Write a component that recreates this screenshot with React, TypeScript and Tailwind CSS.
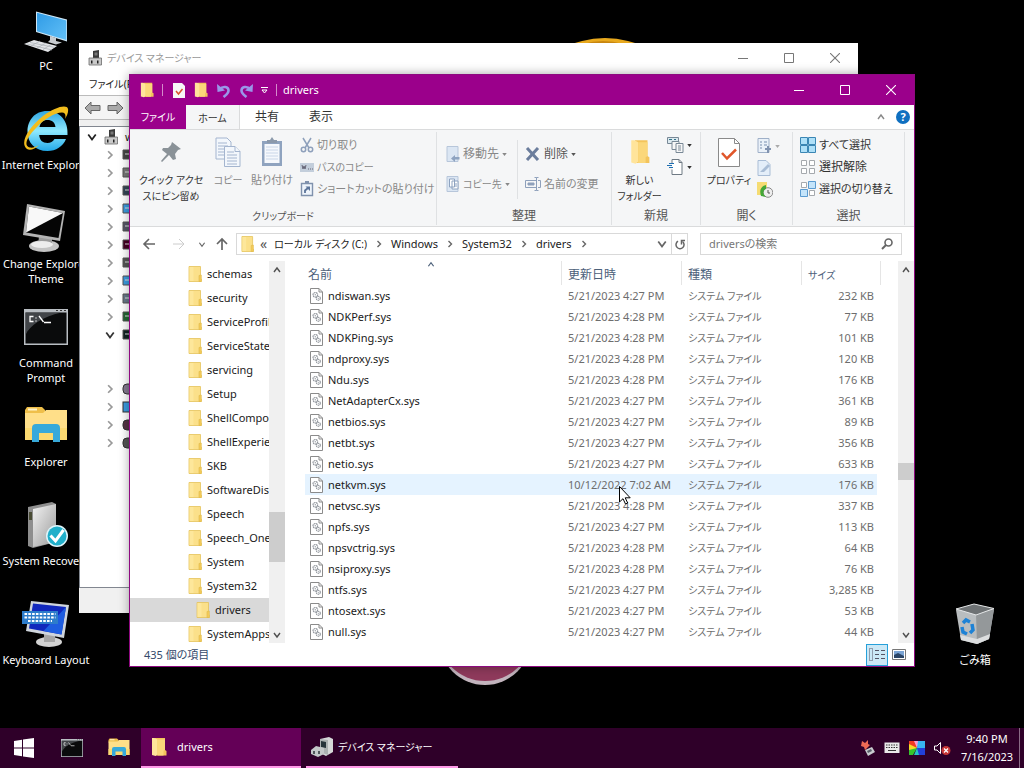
import { useState } from "react";
import type { ReactNode } from "react";

type SysFile = { name: string; date: string; size: string };

const files: SysFile[] = [
  { name: "ndiswan.sys", date: "5/21/2023 4:27 PM", size: "232 KB" },
  { name: "NDKPerf.sys", date: "5/21/2023 4:28 PM", size: "77 KB" },
  { name: "NDKPing.sys", date: "5/21/2023 4:28 PM", size: "101 KB" },
  { name: "ndproxy.sys", date: "5/21/2023 4:28 PM", size: "120 KB" },
  { name: "Ndu.sys", date: "5/21/2023 4:28 PM", size: "176 KB" },
  { name: "NetAdapterCx.sys", date: "5/21/2023 4:27 PM", size: "361 KB" },
  { name: "netbios.sys", date: "5/21/2023 4:27 PM", size: "89 KB" },
  { name: "netbt.sys", date: "5/21/2023 4:27 PM", size: "356 KB" },
  { name: "netio.sys", date: "5/21/2023 4:27 PM", size: "633 KB" },
  { name: "netkvm.sys", date: "10/12/2022 7:02 AM", size: "176 KB" },
  { name: "netvsc.sys", date: "5/21/2023 4:28 PM", size: "337 KB" },
  { name: "npfs.sys", date: "5/21/2023 4:27 PM", size: "113 KB" },
  { name: "npsvctrig.sys", date: "5/21/2023 4:28 PM", size: "64 KB" },
  { name: "nsiproxy.sys", date: "5/21/2023 4:28 PM", size: "76 KB" },
  { name: "ntfs.sys", date: "5/21/2023 4:27 PM", size: "3,285 KB" },
  { name: "ntosext.sys", date: "5/21/2023 4:27 PM", size: "53 KB" },
  { name: "null.sys", date: "5/21/2023 4:27 PM", size: "44 KB" },
];

const folders = [
  "schemas",
  "security",
  "ServiceProfiles",
  "ServiceState",
  "servicing",
  "Setup",
  "ShellComponents",
  "ShellExperiences",
  "SKB",
  "SoftwareDistribution",
  "Speech",
  "Speech_OneCore",
  "System",
  "System32",
  "drivers",
  "SystemApps",
];

/* ---------- shared glyphs ---------- */

function FolderIcon({ className = "h-4 w-[14px]" }: { className?: string }) {
  return (
    <svg viewBox="0 0 14 16" preserveAspectRatio="none" className={`shrink-0 ${className}`} aria-hidden="true">
      <path d="M1 .5h11.500v12l.8.500v2.500H1z" fill="#fbe08a" stroke="#e5c35a" strokeWidth=".8" />
      <path d="M1.500 1h4v14h-4z" fill="#fde79b" />
      <path d="M11 9.500l2.300-.5v6.500H11z" fill="#f4cb5b" stroke="#dfb948" strokeWidth=".6" />
    </svg>
  );
}

function OpenFolderIcon({ className = "h-5 w-4" }: { className?: string }) {
  return (
    <svg viewBox="0 0 16 20" preserveAspectRatio="none" className={`shrink-0 ${className}`} aria-hidden="true">
      <path d="M4 1h10v12l1.500 1v4.500H4z" fill="#f3c45c" />
      <path d="M1 1h2.500l3 1.500v15L4.500 19 1 18z" fill="#ffe49b" />
      <path d="M6.500 2.500H14V13l-1.500 1v4.500H6.500z" fill="#fbd77a" />
    </svg>
  );
}

function Chevron({ dir, className = "h-2 w-2" }: { dir: "up" | "down" | "right"; className?: string }) {
  const d = { up: "M1 6l3-4 3 4", down: "M1 2l3 4 3-4", right: "M2.500 1l3 3-3 3" }[dir];
  return (
    <svg viewBox="0 0 8 8" className={`shrink-0 ${className}`} fill="none" stroke="currentColor" strokeWidth="1.400" aria-hidden="true">
      <path d={d} />
    </svg>
  );
}

function Caret() {
  return (
    <svg viewBox="0 0 6 4" className="h-[3px] w-[5px] shrink-0" fill="currentColor" aria-hidden="true">
      <path d="M0 0h6L3 4z" />
    </svg>
  );
}

function SysFileIcon() {
  return (
    <svg viewBox="0 0 13 16" className="h-4 w-[13px] shrink-0" fill="none" aria-hidden="true">
      <path d="M.5.5h8.500l3.500 3.500v11.500H.5z" fill="#fff" stroke="#8b8b8b" />
      <path d="M9 .5v3.500h3.500" stroke="#8b8b8b" />
      <circle cx="5.300" cy="6.800" r="2.300" stroke="#8d9299" strokeWidth="1.100" strokeDasharray="1.600 .5" />
      <circle cx="5.300" cy="6.800" r=".7" fill="#9aa0a8" />
      <circle cx="8.300" cy="10.300" r="2" stroke="#8d9299" strokeWidth="1.100" strokeDasharray="1.500 .5" />
      <circle cx="8.300" cy="10.300" r=".6" fill="#9aa0a8" />
    </svg>
  );
}

function DeviceIcon({ className = "h-4 w-[14px]" }: { className?: string }) {
  return (
    <svg viewBox="0 0 14 16" className={`shrink-0 ${className}`} aria-hidden="true">
      <path d="M5 1l6-1v8H5z" fill="#3a3a3a" />
      <path d="M6.500 2.500h3v3h-3z" fill="#777" />
      <path d="M1 8h12.500v7H1z" fill="#c9c9c9" stroke="#6c6c6c" strokeWidth=".8" />
      <path d="M3 10.500h1.500v3H3zM9 10.500h1.500v3H9z" fill="#222" />
    </svg>
  );
}

function CaptionButtons({ className }: { className: string }) {
  return (
    <div className={`flex ${className}`}>
      <button type="button" aria-label="最小化" className="flex h-7 w-[46px] items-center justify-center">
        <svg viewBox="0 0 10 10" className="h-[10px] w-[10px]" stroke="currentColor"><path d="M0 5.500h10" /></svg>
      </button>
      <button type="button" aria-label="最大化" className="flex h-7 w-[46px] items-center justify-center">
        <svg viewBox="0 0 10 10" className="h-[10px] w-[10px]" fill="none" stroke="currentColor"><path d="M.5.5h9v9h-9z" /></svg>
      </button>
      <button type="button" aria-label="閉じる" className="flex h-7 w-[46px] items-center justify-center">
        <svg viewBox="0 0 10 10" className="h-[10px] w-[10px]" stroke="currentColor" strokeWidth="1.100"><path d="M0 0l10 10M10 0L0 10" /></svg>
      </button>
    </div>
  );
}

/* ---------- desktop ---------- */

function PcIcon() {
  return (
    <svg viewBox="0 0 48 48" className="h-12 w-12" aria-hidden="true">
      <defs>
        <linearGradient id="pc" x1="0" y1="0" x2="1" y2="1">
          <stop offset="0" stopColor="#2f9be6" />
          <stop offset="1" stopColor="#62c0f7" />
        </linearGradient>
      </defs>
      <path d="M14 5.500l31 8v22L14 26z" fill="#cfe6f5" />
      <path d="M15 6.700l29.300 7.700v19.700L15 25.300z" fill="url(#pc)" />
      <path d="M28 30l6 2v3l6 1.500-6 2-8-2.500 2-2z" fill="#c8ccd0" />
      <path d="M2 38l10-4 23 6-9 6z" fill="#e3e5e8" />
      <path d="M5 38l25 6M8 36.500l25 5M9 40l9-5M15 42l9-5M21 43.500l8-5" stroke="#a8adb3" strokeWidth=".7" />
    </svg>
  );
}

function IeIcon() {
  return (
    <svg viewBox="0 0 48 48" className="h-12 w-12" aria-hidden="true">
      <defs>
        <linearGradient id="ie" x1="0" y1="0" x2="0" y2="1">
          <stop offset="0" stopColor="#2fa5e0" />
          <stop offset=".5" stopColor="#8fe9ff" />
          <stop offset="1" stopColor="#23a9e8" />
        </linearGradient>
      </defs>
      <path
        fillRule="evenodd"
        fill="url(#ie)"
        d="M25 6C13 6 5.500 15 5.500 26.500S13 46 25.500 46C34 46 41 41.500 44 34H32.500c-1.500 2.500-4 4-7 4-5 0-8-3-8.300-8H45.500C46.500 16 38 6 25 6zM17.500 22c.8-4.500 3.500-7 8-7s7.500 2.500 8 7z"
      />
      <path d="M5 44C-3 38 7 22 21 11 33 2 45-1 46 4c.6 3-1 7-3 10 1-4 .5-6.500-3-6.500C33 7.500 22 14 14 23 5 32 1 41 8 42.500c3 .6 6-.8 9-2.500-4 4-9 6-12 4z" fill="#f2bd1d" />
    </svg>
  );
}

function ThemeIcon() {
  return (
    <svg viewBox="0 0 48 48" className="h-12 w-12" aria-hidden="true">
      <ellipse cx="22" cy="42" rx="15" ry="6" fill="#c4c4c4" />
      <path d="M17 32l13 2v8H16z" fill="#9a9a9a" />
      <path d="M5 0l38 7-5 30L1 31z" fill="#b4b4b4" />
      <path d="M7 2.500l34 6.500-4.500 25L4 28.500z" fill="#050505" />
      <path d="M7 2.500l34 6.500L4 28.500z" fill="#f8f8f8" />
      <ellipse cx="20" cy="40.500" rx="11" ry="3.500" fill="#ededed" />
    </svg>
  );
}

function CmdIcon({ className = "h-12 w-12" }: { className?: string }) {
  return (
    <svg viewBox="0 0 48 48" className={className} aria-hidden="true">
      <path d="M2 6h44v36H2z" fill="#b9bec3" />
      <path d="M3.500 9.500h41v31h-41z" fill="#0a0b0c" />
      <path d="M3.500 9.500h36C20 14 8 22 3.500 32z" fill="#55595d" opacity=".75" />
      <path d="M34 7.500h2M38 7.500h2M42 7.500h2" stroke="#333" />
      <path d="M11.500 13.500H8v5h3.500M14 14.500v1M14 17.500v1M17 13l4.500 6M22 19.500h7" stroke="#fff" strokeWidth="1.300" fill="none" />
    </svg>
  );
}

function ExplorerIcon({ className = "h-12 w-12" }: { className?: string }) {
  return (
    <svg viewBox="0 0 48 48" className={className} aria-hidden="true">
      <path d="M3 8l2-3h15l3 3v5H3z" fill="#efbf4a" />
      <path d="M6 6.500h9v2H6z" fill="#fff3c9" />
      <path d="M3 11h18l3-3h21v30H3z" fill="#ffdf89" />
      <path d="M3 26h42v12H3z" fill="#fbd970" />
      <path d="M10 40V26q0-4 4-4h20q4 0 4 4v14h-7v-9H17v9z" fill="#37a9da" />
    </svg>
  );
}

function RecoveryIcon() {
  return (
    <svg viewBox="0 0 48 48" className="h-12 w-12" aria-hidden="true">
      <defs>
        <linearGradient id="rec" x1="0" y1="0" x2="1" y2="1">
          <stop offset="0" stopColor="#f2f2f2" />
          <stop offset="1" stopColor="#9b9b9b" />
        </linearGradient>
      </defs>
      <path d="M6 6l24-5 4 2v38L11 47l-5-2z" fill="#8e8e8e" />
      <path d="M11 8l23-5v38l-23 5z" fill="url(#rec)" />
      <path d="M7 11h3v8H7z" fill="#4a4c35" />
      <circle cx="35" cy="35" r="11" fill="#dff5fb" />
      <circle cx="35" cy="35" r="9.500" fill="#21afca" />
      <path d="M28.500 34.500l5 5.500 8-11" stroke="#fff" strokeWidth="3" fill="none" />
    </svg>
  );
}

function KeyboardLayoutIcon() {
  return (
    <svg viewBox="0 0 48 48" className="h-12 w-12" aria-hidden="true">
      <ellipse cx="27" cy="42" rx="13" ry="5" fill="#d3d3d3" />
      <path d="M22 33h11v9H22z" fill="#a7a7a7" />
      <path d="M9 1l38 4-5 33-38-7z" fill="#cfd5dc" />
      <path d="M11 3.500l33 3.500-4.500 27.500L7 28.500z" fill="#1128bd" />
      <path d="M44 7l-4.500 27.500-18-3.500z" fill="#1e5de0" />
      <path d="M0 11h36v13H0z" fill="#2d7ccb" />
      <path d="M2.500 14h31M2.500 17.500h31M6 21h24" stroke="#fff" strokeWidth="2.200" strokeDasharray="2.600 1.200" />
    </svg>
  );
}

function RecycleBinIcon() {
  return (
    <svg viewBox="0 0 48 48" className="h-12 w-12" aria-hidden="true">
      <path d="M5 10l5 30 16 4 12-5 5-30-18-4z" fill="#b9bdbf" />
      <path d="M25 14l1 30 12-5 5-30z" fill="#94989a" />
      <path d="M5 9l18-5 20 4.500L25 15z" fill="#6e7274" stroke="#e5e7e8" />
      <path d="M9 35l17 4 13-5-1 5-12 5-16-4z" fill="#dcdedf" />
      <g stroke="#1d82d6" strokeWidth="3.500" fill="none">
        <path d="M12 23l3-3 4 2" />
        <path d="M21 24l1 6-3 3" />
        <path d="M16 34l-4-2-1-5" />
      </g>
    </svg>
  );
}

function DesktopIcon({ label, children }: { label: string; children: ReactNode }) {
  return (
    <button type="button" className="flex h-[99px] w-[92px] flex-col items-center gap-1 pt-[6px] text-center leading-[15px] text-white">
      {children}
      <span>{label}</span>
    </button>
  );
}

function Wallpaper() {
  return (
    <svg viewBox="0 0 1024 728" preserveAspectRatio="none" className="absolute inset-0 h-full w-full" aria-hidden="true">
      <ellipse cx="605" cy="76" rx="60" ry="38" fill="#e8a91e" />
      <ellipse cx="603" cy="80" rx="52" ry="39" fill="#c98710" />
      <circle cx="485" cy="639" r="46" fill="#c2b4bd" />
      <circle cx="485" cy="634" r="47" fill="#8f3a5c" />
    </svg>
  );
}

/* ---------- device manager ---------- */

const treeColors = ["#444", "#777", "#345", "#3b9be0", "#556", "#402", "#555", "#3b9be0", "#678", "#263", "#122"];

function DeviceManager() {
  return (
    <section aria-label="デバイス マネージャー" className="absolute left-[79px] top-[43px] flex h-[570px] w-[779px] flex-col bg-[#f0f0f0] shadow-lg">
      <header className="flex h-[30px] items-center bg-white pl-[9px] text-[#999]">
        <DeviceIcon />
        <h2 className="ml-[5px] flex-1 text-[10px]">デバイス マネージャー</h2>
        <CaptionButtons className="text-[#777]" />
      </header>
      <div className="flex h-[22px] items-center bg-white pl-[10px] text-[10px] text-[#222]">
        <button type="button">ファイル(F)</button>
      </div>
      <div className="flex h-[25px] items-center gap-[6px] border-y border-[#bbb] bg-[#f5f5f5] pl-[5px]">
        {["戻る", "進む"].map((label) => (
          <button type="button" key={label} aria-label={label}>
            <svg viewBox="0 0 17 14" className={label === "進む" ? "h-[14px] w-[17px] -scale-x-100" : "h-[14px] w-[17px]"}>
              <path d="M1 7l6-6v3.500h9v5H7V13z" fill="#aaa" stroke="#666" />
            </svg>
          </button>
        ))}
      </div>
      <ul className="mt-[6px] flex-1 border border-[#828790] bg-white pt-px text-[#222]">
        <li className="flex h-[18px] items-center gap-[7px] pl-[7px]">
          <Chevron dir="down" className="h-[10px] w-[10px]" />
          <DeviceIcon />
          <span>w</span>
        </li>
        {treeColors.map((color, i) => (
          <li key={i} className="flex h-[18px] items-center gap-[7px] pl-[25px] text-[#999]">
            {i === 10 ? (
              <Chevron dir="down" className="h-[10px] w-[10px] text-[#333]" />
            ) : (
              <Chevron dir="right" className="h-[10px] w-[10px]" />
            )}
            <svg viewBox="0 0 16 14" className="h-[14px] w-4">
              <path d="M1 2h14v9H1z" fill={color} stroke="#555" />
              <path d="M3 5h4v2H3z" fill="#ddd" opacity=".5" />
            </svg>
          </li>
        ))}
        <li className="h-9" />
        {["#857a90", "#3b9be0", "#534", "#555"].map((color, i) => (
          <li key={i} className="flex h-[18px] items-center gap-[7px] pl-[25px] text-[#999]">
            <Chevron dir="right" className="h-[10px] w-[10px]" />
            <svg viewBox="0 0 16 14" className="h-[14px] w-4">
              <rect x="1" y="2" width="14" height="10" rx={i === 1 ? 0 : 4} fill={color} stroke="#333" />
            </svg>
          </li>
        ))}
      </ul>
      <footer className="h-[25px]" />
    </section>
  );
}

/* ---------- explorer window ---------- */

function QuickAccessBar() {
  return (
    <header className="flex h-[30px] items-center pl-[10px] text-white">
      <OpenFolderIcon className="h-4 w-[14px]" />
      <span className="ml-[8px] h-3 border-l border-[#d48bcb]" />
      <button type="button" aria-label="プロパティ" className="ml-[10px]">
        <svg viewBox="0 0 12 15" className="h-[15px] w-3">
          <path d="M0 0h9l3 3v12H0z" fill="#f7f7f7" />
          <path d="M3 8l2.500 3 4-5" stroke="#d9542b" strokeWidth="1.500" fill="none" />
        </svg>
      </button>
      <button type="button" aria-label="新しいフォルダー" className="ml-[9px]">
        <OpenFolderIcon className="h-4 w-[14px]" />
      </button>
      {["元に戻す", "やり直し"].map((label) => (
        <button type="button" key={label} aria-label={label} className="ml-2">
          <svg viewBox="0 0 15 15" className={label === "やり直し" ? "h-[15px] w-[15px] -scale-x-100" : "h-[15px] w-[15px]"} fill="none">
            <path d="M3.500 6.500C7 2.500 12.500 3.500 12.500 7.500c0 3-2.500 4.500-5 6.500" stroke="#9a97e8" strokeWidth="2.600" />
            <path d="M1 1l.5 8 7.500-1.500z" fill="#9a97e8" />
          </svg>
        </button>
      ))}
      <button type="button" aria-label="クイック アクセス ツール バーのカスタマイズ" className="ml-[7px]">
        <svg viewBox="0 0 7 7" className="h-[7px] w-[7px]" stroke="currentColor" fill="none"><path d="M0 .5h7M1 3h5L3.500 6z" /></svg>
      </button>
      <span className="ml-2 h-3 border-l border-[#d48bcb]" />
      <h1 className="ml-[6px] flex-1">drivers</h1>
      <CaptionButtons className="text-white" />
    </header>
  );
}

function RibbonGroup({ title, titleClass = "text-[12px]", className, children }: { title: string; titleClass?: string; className: string; children: ReactNode }) {
  return (
    <section className={`flex h-[93px] flex-col border-r border-[#dfe1e3] ${className}`}>
      <div className="flex h-[75px]">{children}</div>
      <h3 className={`text-center leading-[18px] text-[#555] ${titleClass}`}>{title}</h3>
    </section>
  );
}

function BigButton({ lines, className, children }: { lines: string[]; className: string; children: ReactNode }) {
  return (
    <button type="button" className={`flex shrink-0 flex-col items-center whitespace-nowrap leading-4 ${className}`}>
      <span className="flex h-10 items-center justify-center">{children}</span>
      {lines.map((line) => (
        <span key={line}>{line}</span>
      ))}
    </button>
  );
}

function SmallButton({ label, caret, className = "text-[#888]", children }: { label?: string; caret?: boolean; className?: string; children: ReactNode }) {
  return (
    <button type="button" className={`flex h-[22px] items-center gap-[3px] whitespace-nowrap ${className}`}>
      {children}
      {label ? <span>{label}</span> : null}
      {caret ? <Caret /> : null}
    </button>
  );
}

function Ribbon() {
  return (
    <div className="flex h-[98px] border-y border-[#dadbdc] bg-[#f5f6f7] pt-[2px]">
      <RibbonGroup title="クリップボード" titleClass="text-[10px]" className="w-[307px]">
        <BigButton lines={["クイック アクセ", "スにピン留め"]} className="ml-1 w-[74px] text-[10px] text-[#333]">
          <svg viewBox="0 0 22 22" className="h-[22px] w-[22px]"><path d="M12 1l9 7-3 1-3 4 1 5-3 1-4-5-7 7-1-1 6-7-5-4 1-2 5 0 3-3z" fill="#8a9298" /></svg>
        </BigButton>
        <BigButton lines={["コピー"]} className="w-10 text-[10px] text-[#888]">
          <svg viewBox="0 0 26 30" className="h-[30px] w-[26px]" fill="#f3f7fc" stroke="#a4b5cf">
            <path d="M1 1h11l4 4v17H1z" />
            <path d="M3 6h9M3 9h10M3 12h8M3 15h6M3 18h6" />
            <path d="M9.500 9.500H20l5 5v15H9.500z" />
            <path d="M20 9.500v5h5M12 15h7M12 18h10M12 21h10M12 24h10M12 27h10" />
          </svg>
        </BigButton>
        <BigButton lines={["貼り付け"]} className="w-12 text-[#888]">
          <svg viewBox="0 0 22 30" className="h-[30px] w-[22px]">
            <path d="M1 4h20v25H1z" fill="#8fa3bf" />
            <path d="M3.500 7h15v19h-15z" fill="#f5f8fc" />
            <path d="M5 10h12M5 13h12M5 16h12M5 19h12M5 22h12" stroke="#c9d6e8" />
            <path d="M6 6V3h3l2-3 2 3h3v3z" fill="#8b99ab" />
          </svg>
        </BigButton>
        <div className="ml-1 flex flex-col pt-[2px]">
          <SmallButton label="切り取り">
            <svg viewBox="0 0 14 16" className="h-4 w-[14px]" fill="none" stroke="#8ea0bb" strokeWidth="1.500"><path d="M3 1l6 10M11 1L5 11" /><circle cx="3.500" cy="12.500" r="2.200" /><circle cx="10.500" cy="12.500" r="2.200" /></svg>
          </SmallButton>
          <SmallButton label="パスのコピー" className="text-[10px] text-[#888]">
            <svg viewBox="0 0 14 9" className="h-[9px] w-[14px]"><path d="M0 0h14v9H0z" fill="#c3cedb" /><path d="M2 2l1 4 1-3 1 3 1-4M8 6h1M10 6h1M12 6h1" stroke="#667" fill="none" /></svg>
          </SmallButton>
          <SmallButton label="ショートカットの貼り付け">
            <svg viewBox="0 0 14 16" className="h-4 w-[14px]"><path d="M1.500 2.500h11v12h-11z" fill="#eef4fb" stroke="#8092ad" strokeWidth="1.400" /><path d="M5 0h4v3H5z" fill="#8092ad" /><path d="M5 12V9.500L8 7" fill="none" stroke="#5b7499" strokeWidth="1.800" /><path d="M5.500 5.500H10V10z" fill="#5b7499" /></svg>
          </SmallButton>
        </div>
      </RibbonGroup>

      <RibbonGroup title="整理" className="w-[175px]">
        <div className="my-2 flex w-[81px] flex-col gap-2 border-r border-[#dfe1e3] pl-[9px] pt-[3px]">
          <SmallButton label="移動先" caret className="text-[12px] text-[#888]">
            <svg viewBox="0 0 14 16" className="h-4 w-[14px]"><path d="M1 .5h11v15H1z" fill="#dbe6f3" stroke="#b7c6da" /><path d="M13.500 11H9V9l-4 3.500L9 16v-2.500h4.500z" fill="#8ea3c0" /></svg>
          </SmallButton>
          <SmallButton label="コピー先" caret className="text-[10px] text-[#888]">
            <svg viewBox="0 0 14 16" className="h-4 w-[14px]"><path d="M1 .5h11v15H1z" fill="#dbe6f3" stroke="#b7c6da" /><path d="M3.500 3h5v8h-5zM6 5h6v8H6z" fill="#fff" stroke="#8ea3c0" /><path d="M8 8h3M8 10h3" stroke="#8ea3c0" /></svg>
          </SmallButton>
        </div>
        <div className="my-2 flex flex-col gap-2 pl-[7px] pt-[3px]">
          <SmallButton label="削除" caret className="text-[12px] text-[#555]">
            <svg viewBox="0 0 16 14" className="h-[14px] w-4" stroke="#6b7d9c" strokeWidth="3"><path d="M2 1l11 12M13 1L2 13" /></svg>
          </SmallButton>
          <SmallButton label="名前の変更">
            <svg viewBox="0 0 16 14" className="h-[14px] w-4" fill="none" stroke="#8ea0bb"><path d="M11 3.500H.5v7H11M13 3.500h2.500v7H13M9.500.5h2v13h-2M11.500.5h2M11.500 13.500h2" /><path d="M3 6h6v2H3z" fill="#8ea0bb" /></svg>
          </SmallButton>
        </div>
      </RibbonGroup>

      <RibbonGroup title="新規" className="w-[89px]">
        <BigButton lines={["新しい", "フォルダー"]} className="w-[55px] text-[10px] text-[#333]">
          <OpenFolderIcon className="h-[26px] w-5" />
        </BigButton>
        <div className="flex flex-col pt-[2px]">
          <SmallButton caret className="text-[#333]">
            <svg viewBox="0 0 17 16" className="h-4 w-[17px]" fill="#f7f7f7" stroke="#788896"><path d="M.5.5h11v6H.5z" fill="#dbe9ef" /><path d="M2 2.500h3M7 2.500h2" stroke="#35748a" /><path d="M5 4.500h7v8H5z" /><path d="M9 6.500h7v9H9z" /><path d="M11 9h3M11 11h3M11 13h3" /></svg>
          </SmallButton>
          <SmallButton caret className="text-[#333]">
            <svg viewBox="0 0 17 16" className="h-4 w-[17px]" fill="none" stroke="#6f7a84"><path d="M5 4V.5h7l3 3v12H5v-5" fill="#fff" /><path d="M12 .5v3h3" /><path d="M2 4.500h5M0 6.500h5M2 8.500h4" stroke="#1f6fb2" /></svg>
          </SmallButton>
        </div>
      </RibbonGroup>

      <RibbonGroup title="開く" className="w-[92px]">
        <BigButton lines={["プロパティ"]} className="w-14 text-[10px] text-[#333]">
          <svg viewBox="0 0 22 29" className="h-[29px] w-[22px]" fill="none"><path d="M.5.5h16l5 5v23H.5z" fill="#fff" stroke="#8a8a8a" /><path d="M16.500.5v5h5" stroke="#8a8a8a" /><path d="M4 15l5 5.500 9-9" stroke="#e0562a" strokeWidth="2.500" /></svg>
        </BigButton>
        <div className="flex flex-col pt-[3px]">
          <SmallButton caret className="text-[#aaa]">
            <svg viewBox="0 0 15 16" className="h-4 w-[15px]" fill="none" stroke="#9fb0c8"><path d="M1 .5h11v14H1z" fill="#eaf1f9" /><path d="M3 4h2M7 4h3M3 7h2M7 7h3M3 10h2" strokeWidth="1.500" /><path d="M8 11h6M11 8v7" stroke="#8193b0" strokeWidth="2" /></svg>
          </SmallButton>
          <SmallButton>
            <svg viewBox="0 0 15 16" className="h-4 w-[15px]" fill="none"><path d="M1 .5h8l4 4v11H1z" fill="#e4eef9" stroke="#a9bdd6" /><path d="M3 12l8-8 2 2-6 6z" fill="#a9bdd6" /></svg>
          </SmallButton>
          <SmallButton>
            <svg viewBox="0 0 16 16" className="h-4 w-4" fill="none"><path d="M0 0h10v13H0z" fill="#f5dc73" /><circle cx="11" cy="10.500" r="4.800" fill="#eee" stroke="#888" /><path d="M11 8v3h2" stroke="#555" /><path d="M9 3C4 4 2 8 4 14l5 1c-4-3-3-7 0-8z" fill="#43a838" /></svg>
          </SmallButton>
        </div>
      </RibbonGroup>

      <RibbonGroup title="選択" className="w-[112px]">
        <div className="flex flex-col pl-[7px] pt-[2px]">
          <SmallButton label="すべて選択" className="text-[#333]">
            <svg viewBox="0 0 16 16" className="h-4 w-4" fill="#aee0f8" stroke="#3a86b4"><path d="M.5.5h7v7h-7zM8.500.5h7v7h-7zM.5 8.500h7v7h-7zM8.500 8.500h7v7h-7z" /></svg>
          </SmallButton>
          <SmallButton label="選択解除" className="text-[12px] text-[#333]">
            <svg viewBox="0 0 16 16" className="h-4 w-4" fill="#fff" stroke="#a5a9ad"><path d="M1.500 1.500h5v5h-5zM9.500 1.500h5v5h-5zM1.500 9.500h5v5h-5zM9.500 9.500h5v5h-5z" /></svg>
          </SmallButton>
          <SmallButton label="選択の切り替え" className="text-[#333]">
            <svg viewBox="0 0 16 16" className="h-4 w-4" fill="#c4e4fa"><path d="M8.500.5h7v7h-7zM.5 8.500h7v7h-7z" stroke="#5b9bd0" /><path d="M1.500 1.500h5v5h-5zM9.500 9.500h5v5h-5z" stroke="#a5a9ad" fill="#fff" /></svg>
          </SmallButton>
        </div>
      </RibbonGroup>
    </div>
  );
}

function AddressRow() {
  return (
    <div className="flex h-[34px] items-center pr-3 text-[#666]">
      <button type="button" aria-label="戻る" className="ml-3">
        <svg viewBox="0 0 14 12" className="h-3 w-[14px]" fill="none" stroke="currentColor" strokeWidth="1.600"><path d="M13 6H2M7 1L2 6l5 5" /></svg>
      </button>
      <button type="button" aria-label="進む" className="ml-4 text-[#ccc]">
        <svg viewBox="0 0 14 12" className="h-3 w-[14px]" fill="none" stroke="currentColor"><path d="M1 6h11M7 1l5 5-5 5" /></svg>
      </button>
      <button type="button" aria-label="最近表示した場所" className="ml-3">
        <Chevron dir="down" className="h-[7px] w-2" />
      </button>
      <button type="button" aria-label="上へ" className="ml-[10px]">
        <svg viewBox="0 0 12 14" className="h-[14px] w-3" fill="none" stroke="currentColor" strokeWidth="1.700"><path d="M6 13V2M1 7l5-5 5 5" /></svg>
      </button>
      <nav aria-label="アドレス" className="ml-2 flex h-[22px] flex-1 items-center border border-[#d9d9d9] bg-white pl-1 text-[#222]">
        <FolderIcon className="h-4 w-[13px]" />
        <span className="ml-[6px] text-[14px] text-[#555]">«</span>
        <a href="#c" className="ml-[7px] text-[10px]">ローカル ディスク (C:)</a>
        {["Windows", "System32", "drivers"].map((part) => (
          <span key={part} className="flex items-center">
            <Chevron dir="right" className="mx-2 h-2 w-2 text-[#666]" />
            <a href={`#${part}`}>{part}</a>
          </span>
        ))}
        <Chevron dir="right" className="mx-2 h-2 w-2 text-[#666]" />
        <button type="button" aria-label="以前の場所" className="ml-auto mr-1 text-[#666]">
          <Chevron dir="down" className="h-[10px] w-[10px]" />
        </button>
        <button type="button" aria-label="最新の情報に更新" className="flex h-full w-4 items-center justify-center border-l border-[#d9d9d9] text-[#666]">
          <svg viewBox="0 0 10 12" className="h-3 w-[10px]" fill="none" stroke="currentColor" strokeWidth="1.500"><path d="M3 3.200a4 4 0 1 0 4.500.3" /><path d="M6.500 6.500V2.500H10" /></svg>
        </button>
      </nav>
      <label className="ml-3 flex h-[22px] w-[202px] items-center border border-[#d9d9d9] bg-white px-2">
        <input type="text" aria-label="driversの検索" placeholder="driversの検索" className="min-w-0 flex-1 outline-none placeholder:text-[#777]" />
        <svg viewBox="0 0 12 12" className="h-3 w-3" fill="none" stroke="currentColor" strokeWidth="1.600"><circle cx="7.500" cy="4.500" r="3.500" /><path d="M5 7L1 11" strokeWidth="2" /></svg>
      </label>
    </div>
  );
}

function Scrollbar({ thumb, grow }: { thumb: string; grow: string }) {
  return (
    <div className="flex w-4 shrink-0 flex-col bg-[#f0f0f0] text-[#505050]">
      <div className="flex h-[18px] items-center justify-center">
        <Chevron dir="up" />
      </div>
      <div className={grow} />
      <div className={`bg-[#cdcdcd] ${thumb}`} />
      <div className="flex-1" />
      <div className="flex h-[17px] items-center justify-center">
        <Chevron dir="down" />
      </div>
    </div>
  );
}

function FileTable() {
  const [hovered, setHovered] = useState("netkvm.sys");

  return (
    <table className="w-[576px] table-fixed border-separate border-spacing-0 whitespace-nowrap">
      <colgroup>
        <col />
        <col className="w-[120px]" />
        <col className="w-[120px]" />
        <col className="w-[76px]" />
        <col className="w-1" />
      </colgroup>
      <thead>
        <tr className="h-6 text-left text-[12px] text-[#4c607a]">
          <th className="relative p-0 pl-[3px] pt-1 font-normal">
            名前
            <span className="absolute left-[122px] top-0">
              <Chevron dir="up" className="h-[7px] w-2" />
            </span>
          </th>
          <th className="border-l border-[#e5e5e5] p-0 pl-[6px] pt-1 font-normal">更新日時</th>
          <th className="border-l border-[#e5e5e5] p-0 pl-[6px] pt-1 font-normal">種類</th>
          <th className="border-l border-[#e5e5e5] p-0 pl-[6px] pt-1 text-[10px] font-normal">サイズ</th>
          <th className="border-r border-[#e5e5e5] p-0" aria-hidden="true" />
        </tr>
      </thead>
      <tbody>
        {files.map((file) => {
          const fill = hovered === file.name ? "bg-[#e5f3ff]" : "";
          return (
            <tr key={file.name} className="h-[21px] text-[#6d6d6d]" onMouseEnter={() => setHovered(file.name)}>
              <td className={`p-0 pl-[5px] ${fill}`}>
                <span className="flex items-center gap-[5px] text-[#1a1a1a]">
                  <SysFileIcon />
                  {file.name}
                </span>
              </td>
              <td className={`p-0 pl-[7px] ${fill}`}>{file.date}</td>
              <td className={`p-0 pl-[7px] text-[10px] ${fill}`}>システム ファイル</td>
              <td className={`p-0 pr-[3px] text-right ${fill}`}>{file.size}</td>
              <td className="p-0" />
            </tr>
          );
        })}
      </tbody>
    </table>
  );
}

function ExplorerWindow() {
  const [tab, setTab] = useState("ホーム");

  return (
    <section
      aria-label="drivers"
      className="absolute left-[129px] top-[74px] flex w-[786px] flex-col border border-[#8e0a80] bg-white shadow-[0_0_10px_rgba(0,0,0,0.35)]"
    >
      <div className="bg-[#9b008b]">
        <QuickAccessBar />
      </div>
      <div className="flex h-6 items-stretch text-[#333]">
        <button type="button" className="w-14 bg-[#9b008b] text-[10px] text-white">ファイル</button>
        {["ホーム", "共有", "表示"].map((name) => (
          <button
            type="button"
            key={name}
            onClick={() => setTab(name)}
            className={`w-[54px] ${name === "ホーム" ? "text-[10px]" : "text-[12px]"} ${
              tab === name ? "-mb-px border-r border-[#dadbdc] bg-[#f5f6f7]" : ""
            }`}
          >
            {name}
          </button>
        ))}
        <button type="button" aria-label="リボンの最小化" className="ml-auto mr-[11px] text-[#888]">
          <Chevron dir="up" />
        </button>
        <button type="button" aria-label="ヘルプ" className="mr-1 flex h-[14px] w-[14px] items-center justify-center self-center rounded-full bg-[#0f6fc0] font-bold leading-[14px] text-white">
          ?
        </button>
      </div>
      <Ribbon />
      <AddressRow />
      <div className="flex h-[382px]">
        <ul className="w-[139px] shrink-0 overflow-hidden whitespace-nowrap pt-px text-[#1a1a1a]">
          {folders.map((name) => (
            <li
              key={name}
              className={`flex h-6 items-center gap-[5px] ${name === "drivers" ? "bg-[#d9d9d9] pl-[66px]" : "pl-[58px]"}`}
            >
              <FolderIcon />
              {name}
            </li>
          ))}
        </ul>
        <Scrollbar grow="h-[233px]" thumb="h-[50px]" />
        <div className="flex-1 overflow-hidden pl-5">
          <FileTable />
        </div>
        <Scrollbar grow="h-[184px]" thumb="h-[17px]" />
      </div>
      <footer className="flex h-[23px] items-center pl-[14px] pr-1 text-[#34496a]">
        <p className="flex-1">435 個の項目</p>
        <button type="button" aria-label="詳細" className="flex h-[22px] w-[22px] items-center justify-center border border-[#26a0da] bg-[#cbe8f6]">
          <svg viewBox="0 0 17 13" className="h-[13px] w-[17px]" stroke="#556" fill="none"><path d="M.5.500h3v12h-3z" strokeDasharray="1 1" /><path d="M6 2.500h4M12 2.500h4M6 6.500h4M12 6.500h4M6 10.500h4M12 10.500h4" /></svg>
        </button>
        <button type="button" aria-label="大アイコン" className="flex h-[22px] w-[22px] items-center justify-center">
          <svg viewBox="0 0 14 11" className="h-[11px] w-[14px]"><path d="M.5.5h13v10H.5z" fill="#fff" stroke="#777" /><path d="M2 2h10v7H2z" fill="#7ba4d4" /><path d="M2 6l4-2 6 3v2H2z" fill="#2b4566" /></svg>
        </button>
      </footer>
    </section>
  );
}

/* ---------- taskbar ---------- */

function Taskbar() {
  return (
    <footer className="relative flex h-10 items-stretch bg-[#2f0029] text-white">
      <button type="button" aria-label="スタート" className="flex w-12 items-center justify-center">
        <svg viewBox="0 0 20 20" className="h-5 w-5" fill="#fff"><path d="M0 3l8-1.200v7.700H0zM9 1.600L20 0v9.500H9zM0 10.500h8v7.700L0 17zM9 10.500h11V20L9 18.400z" /></svg>
      </button>
      <button type="button" aria-label="Command Prompt" className="flex w-12 items-center justify-center">
        <CmdIcon className="h-6 w-6" />
      </button>
      <button type="button" aria-label="Explorer" className="flex w-[45px] items-center justify-center">
        <ExplorerIcon className="h-6 w-6" />
      </button>
      <button type="button" className="flex w-40 items-center gap-[10px] border-b-2 border-[#ff9ae8] bg-[#640057] pl-[10px]">
        <OpenFolderIcon />
        drivers
      </button>
      <button type="button" className="ml-[5px] flex w-[152px] items-center gap-[5px] border-b-2 border-[#ff9ae8] pl-[5px] text-[10px]">
        <svg viewBox="0 0 22 20" className="h-5 w-[22px]">
          <path d="M9 2l9-2 4 2v13l-7 4-6-3z" fill="#d5d8d8" />
          <path d="M9 2l8 1v15l-8-3z" fill="#aab0b0" />
          <path d="M10 4l5 1v6l-5-1z" fill="#26343a" />
          <path d="M0 13l5-4 8 2v6l-6 3-7-3z" fill="#c3c8c8" />
          <path d="M2 14h2v3H2zM7 14h2v3H7z" fill="#50585a" />
        </svg>
        デバイス マネージャー
      </button>
      <div className="ml-auto flex items-center gap-[9px]">
        <svg viewBox="0 0 14 16" className="h-4 w-[14px]"><path d="M4 10l7-3 3 5-7 4z" fill="#c9ccd0" /><path d="M6 11l4-2 1 2-4 2z" fill="#59616a" /><path d="M1 1l3 2 3-3v4l2 1-5 5-1-3-3-1z" fill="#ee6a55" /></svg>
        <svg viewBox="0 0 16 12" className="h-3 w-4"><path d="M.5.500h15v10.500H.5z" fill="#e9e9e9" /><path d="M2 3h12M2 5.500h12" stroke="#333" strokeDasharray="1.500 1" /><path d="M4 8.500h8" stroke="#333" /></svg>
        <svg viewBox="0 0 16 14" className="h-[14px] w-4"><path d="M0 0h8v7H0z" fill="#f03a20" /><path d="M5 0h6L8 7z" fill="#ff9ad0" /><path d="M9 0h7v7H8z" fill="#38b6f0" /><path d="M0 5l8 2-4 7H0z" fill="#36c52c" /><path d="M0 3l8 4-8 2z" fill="#f5dd25" /><path d="M8 7l8 0v7H6z" fill="#2240d8" /><path d="M8 7l2 7H5z" fill="#25c7c5" /></svg>
        <svg viewBox="0 0 17 14" className="h-[14px] w-[17px]" fill="none"><path d="M.5 5H3l3.500-3.500v11L3 9H.5z" stroke="#fff" /><circle cx="12" cy="9.500" r="4.500" fill="#c83737" /><path d="M10 7.500l4 4M14 7.500l-4 4" stroke="#fff" strokeWidth="1.300" /></svg>
        <button type="button" className="w-[54px] whitespace-nowrap text-center leading-[18px]">
          9:40 PM
          <br />
          7/16/2023
        </button>
      </div>
      <div className="ml-[5px] w-[5px] border-l border-[#8a6c86]" />
    </footer>
  );
}

export default function App() {
  return (
    <div className="flex h-screen flex-col overflow-hidden bg-black font-['Noto_Sans','Noto_Sans_CJK_JP',sans-serif] text-[11px] leading-4 [font-feature-settings:'palt']">
      <main className="relative flex-1 overflow-hidden">
        <Wallpaper />
        <div className="relative flex h-full items-start justify-between">
          <div className="flex flex-col">
            <DesktopIcon label="PC"><PcIcon /></DesktopIcon>
            <DesktopIcon label="Internet Explorer"><IeIcon /></DesktopIcon>
            <DesktopIcon label="Change Explorer Theme"><ThemeIcon /></DesktopIcon>
            <DesktopIcon label="Command Prompt"><CmdIcon /></DesktopIcon>
            <DesktopIcon label="Explorer"><ExplorerIcon /></DesktopIcon>
            <DesktopIcon label="System Recovery"><RecoveryIcon /></DesktopIcon>
            <DesktopIcon label="Keyboard Layout"><KeyboardLayoutIcon /></DesktopIcon>
          </div>
          <div className="mr-[3px] self-end pb-[35px]">
            <DesktopIcon label="ごみ箱"><RecycleBinIcon /></DesktopIcon>
          </div>
        </div>
        <DeviceManager />
        <ExplorerWindow />
        <svg viewBox="0 0 12 19" className="pointer-events-none absolute left-[619px] top-[486px] h-[19px] w-3" aria-hidden="true">
          <path d="M.5.5v15.500l3.500-3.300L6.500 18l2.200-1-2.500-5.200h5z" fill="#fff" stroke="#000" />
        </svg>
      </main>
      <Taskbar />
    </div>
  );
}
